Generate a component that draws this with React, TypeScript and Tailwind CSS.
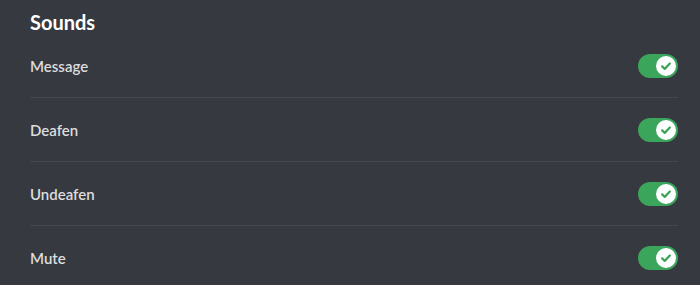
import React from 'react';

const sounds = ['Message', 'Deafen', 'Undeafen', 'Mute'];

const Toggle = () => (
  <div className="w-[40px] h-[24px] rounded-full bg-[#3ba55c] flex items-center justify-end pr-[2px]">
    <div className="w-[20px] h-[20px] rounded-full bg-white flex items-center justify-center">
      <svg width="14" height="14" viewBox="0 0 20 20" fill="none">
        <path d="M4.5 10.5l3.7 3.6L15.5 6.5" stroke="#3ba55c" strokeWidth="3.2" strokeLinecap="round" strokeLinejoin="round" />
      </svg>
    </div>
  </div>
);

export default function App() {
  return (
    <div className="w-[700px] h-[285px] overflow-hidden bg-[#36393f] px-[30px] font-['Lato',sans-serif]">
      <div className="h-[34px] pt-[10px]">
        <h2 className="text-[20px] leading-[24px] font-bold text-white">Sounds</h2>
      </div>
      <div className="w-[648px]">
        {sounds.map((name, i) => (
          <div
            key={name}
            className={`h-[64px] flex items-center justify-between ${i < sounds.length - 1 ? 'border-b border-[#43464c]' : ''}`}
          >
            <span className="text-[15px] leading-[20px] font-semibold text-[#dcddde]">{name}</span>
            <Toggle />
          </div>
        ))}
      </div>
    </div>
  );
}
